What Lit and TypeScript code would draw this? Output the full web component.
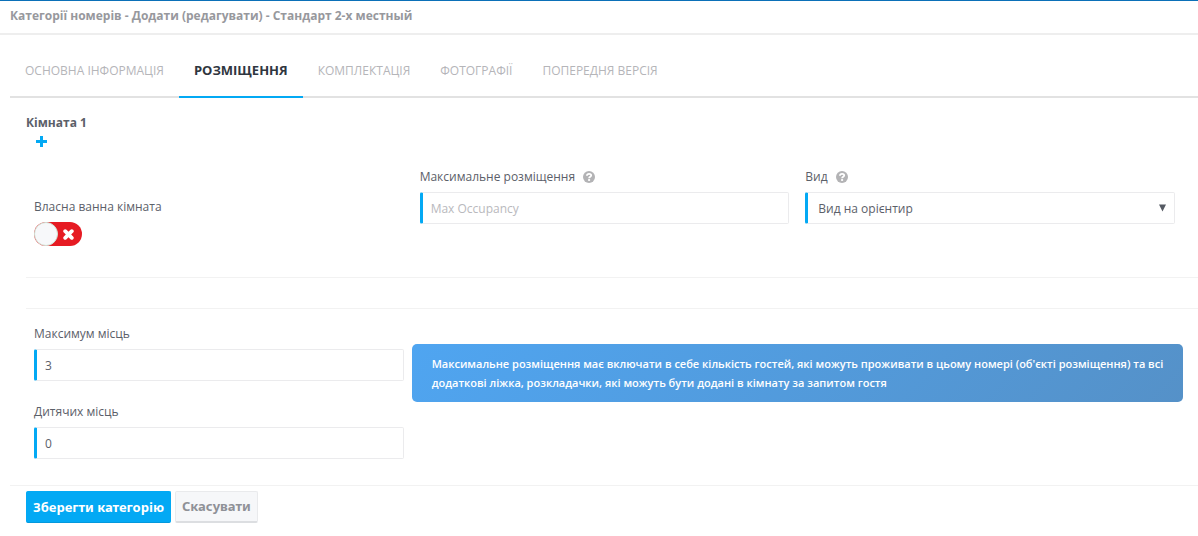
import { LitElement, html, css, svg } from "lit";
import { customElement, property, state } from "lit/decorators.js";

const TABS = [
  { id: "main", title: "Основна інформація" },
  { id: "placement", title: "Розміщення" },
  { id: "equipment", title: "Комплектація" },
  { id: "photos", title: "Фотографії" },
  { id: "preview", title: "Попередня версія" },
];

const plusIcon = svg`<path d="M4 0h3v4h4v3h-4v4h-3v-4h-4v-3h4z" fill="currentColor" />`;

@customElement("help-mark")
class HelpMark extends LitElement {
  static styles = css`
    :host {
      display: block;
      width: 12px;
      height: 12px;
      color: #b3b3b5;
    }
    svg {
      display: block;
    }
  `;

  render() {
    return html`<svg width="12" height="12" viewBox="0 0 12 12" aria-hidden="true">
      <circle cx="6" cy="6" r="6" fill="currentColor" />
      <path
        d="M3.9 4.7C4 3.4 4.9 2.8 6.1 2.8C7.3 2.8 8.2 3.5 8.2 4.5C8.2 5.9 6.1 5.8 6.1 7.3"
        fill="none"
        stroke="#fff"
        stroke-width="1.8"
      />
      <rect x="5.1" y="8.1" width="2" height="1.8" fill="#fff" />
    </svg>`;
  }
}

@customElement("app-root")
class AppRoot extends LitElement {
  @property() heading = "Категорії номерів - Додати (редагувати) - Стандарт 2-х местный";
  @state() private active = "placement";
  @state() private bathroom = false;

  static styles = css`
    :host {
      display: block;
      background: #fff;
      color: #5b6069;
      font-family: "Open Sans", "Noto Sans", sans-serif;
      font-size: 12px;
      line-height: 18px;
    }
    * {
      box-sizing: border-box;
    }
    .top {
      border-top: 1px solid #0b70b8;
      border-bottom: 2px solid #eee;
      padding: 6px 10px 8px;
    }
    h1 {
      margin: 0;
      font-size: 12px;
      line-height: 18px;
      font-weight: 700;
      color: #97989d;
    }
    .body {
      padding-left: 10px;
    }
    .tabs {
      display: flex;
      margin-top: 10px;
      border-bottom: 2px solid #e2e2e2;
    }
    .tab {
      padding: 17px 15px 16px;
      margin-bottom: -2px;
      border-bottom: 2px solid transparent;
      color: #b5b5b9;
      text-decoration: none;
      text-transform: uppercase;
    }
    .tab.active {
      padding: 16px 15px 17px;
      color: #2f3640;
      font-size: 13px;
      font-weight: 700;
      border-bottom-color: #03a9f4;
    }
    .panel {
      padding: 16px 0 0 16px;
    }
    h2 {
      margin: 0;
      font-size: 12px;
      line-height: 18px;
      font-weight: 700;
    }
    .add {
      display: block;
      margin: 4px 0 0 10px;
      padding: 0;
      border: 0;
      background: none;
      color: #03a9f4;
    }
    .add svg {
      display: block;
    }
    .row {
      display: grid;
      grid-template-columns: repeat(3, 1fr);
      margin-right: 15px;
    }
    .room {
      padding: 21px 0 26px;
    }
    .cell {
      padding: 0 8px;
    }
    .low {
      padding-top: 30px;
    }
    .caption {
      display: flex;
      align-items: center;
      gap: 8px;
      margin-bottom: 6px;
    }
    .field {
      display: block;
      width: 100%;
      height: 32px;
      margin: 0;
      padding: 0 8px;
      border: 1px solid #ebebed;
      border-left: 3px solid #03a9f4;
      border-radius: 2px;
      outline: 0;
      background: #fff;
      color: #5b6069;
      font: inherit;
    }
    .field::placeholder {
      color: #b9b9bd;
      opacity: 1;
    }
    .select {
      display: grid;
      align-items: center;
    }
    .select > * {
      grid-area: 1 / 1;
    }
    .select .field {
      appearance: none;
      padding: 1px 10px 0;
    }
    .arrow {
      justify-self: end;
      margin-right: 9px;
      pointer-events: none;
    }
    .switch {
      display: inline-grid;
      align-items: center;
      width: 48px;
      height: 24px;
      border-radius: 12px;
      background: #e61b23;
    }
    .switch > * {
      grid-area: 1 / 1;
    }
    .switch input {
      width: 48px;
      height: 24px;
      margin: 0;
      opacity: 0;
    }
    .knob {
      width: 24px;
      height: 24px;
      border: 1px solid #cfe3d6;
      border-radius: 50%;
      background: #f7f8fa;
      pointer-events: none;
    }
    .cross {
      justify-self: end;
      margin-right: 8px;
      pointer-events: none;
    }
    .switch.on {
      background: #2bb673;
    }
    .switch.on .knob {
      justify-self: end;
    }
    .switch.on .cross {
      display: none;
    }
    .rule {
      margin: 0;
      border: 0;
      border-top: 1px solid #f2f2f2;
    }
    .rule + .rule {
      margin-top: 30px;
    }
    .limits {
      display: grid;
      grid-template-columns: 1fr 2fr;
      margin-right: 15px;
      padding: 16px 0 26px;
    }
    .stack {
      display: grid;
      gap: 22px;
      padding: 0 8px;
    }
    .note {
      align-self: start;
      margin: 19px 0 0;
      padding: 10px 16px 10px 20px;
      border-radius: 5px;
      background: linear-gradient(135deg, #4fa5f1, #5591c8);
      color: #fff;
      font-size: 11px;
      font-weight: 600;
      line-height: 19px;
    }
    .actions {
      display: flex;
      gap: 4px;
      padding: 5px 16px 13px;
    }
    .btn {
      height: 32px;
      padding: 0 6px 1px;
      border: 1px solid #e9eaec;
      border-bottom: 2px solid #dcdee1;
      border-radius: 2px;
      background: #f6f7f9;
      color: #8f9197;
      font: 700 13px/18px "Noto Sans", "Open Sans", sans-serif;
    }
    .btn.save {
      border-color: #03a9f4;
      border-bottom: 1px solid #0398dc;
      background: #03a9f4;
      color: #fff;
    }
  `;

  render() {
    return html`
      <header class="top"><h1>${this.heading}</h1></header>
      <main class="body">
        <nav class="tabs">
          ${TABS.map(
            (t) => html`<a
              class="tab ${t.id === this.active ? "active" : ""}"
              href="#${t.id}"
              @click=${() => (this.active = t.id)}
              >${t.title}</a
            >`,
          )}
        </nav>
        <section class="panel">
          <h2>Кімната 1</h2>
          <button class="add" type="button" aria-label="+">
            <svg width="11" height="11" viewBox="0 0 11 11">${plusIcon}</svg>
          </button>
          <div class="row room">
            <div class="cell low">
              <label class="caption" for="bath">Власна ванна кімната</label>
              <span class="switch ${this.bathroom ? "on" : ""}">
                <input
                  id="bath"
                  type="checkbox"
                  .checked=${this.bathroom}
                  @change=${() => (this.bathroom = !this.bathroom)}
                />
                <span class="knob"></span>
                <svg class="cross" width="11" height="11" viewBox="0 0 11 11">
                  <path d="M2.2 2.2L8.8 8.8M8.8 2.2L2.2 8.8" stroke="#fff" stroke-width="3.8" stroke-linecap="round" />
                </svg>
              </span>
            </div>
            <div class="cell">
              <label class="caption" for="max">Максимальне розміщення <help-mark></help-mark></label>
              <input class="field" id="max" type="text" placeholder="Max Occupancy" />
            </div>
            <div class="cell">
              <label class="caption" for="view">Вид <help-mark></help-mark></label>
              <div class="select">
                <select class="field" id="view">
                  <option>Вид на орієнтир</option>
                </select>
                <svg class="arrow" width="7" height="8" viewBox="0 0 7 8">
                  <path d="M0 0.5H7L3.5 7.5Z" fill="#555a63" />
                </svg>
              </div>
            </div>
          </div>
          <hr class="rule" />
          <hr class="rule" />
          <div class="limits">
            <div class="stack">
              <div>
                <label class="caption" for="seats">Максимум місць</label>
                <input class="field" id="seats" type="text" value="3" />
              </div>
              <div>
                <label class="caption" for="kids">Дитячих місць</label>
                <input class="field" id="kids" type="text" value="0" />
              </div>
            </div>
            <p class="note">
              Максимальне розміщення має включати в себе кількість гостей, які можуть проживати в цьому номері
              (об'єкті розміщення) та всі додаткові ліжка, розкладачки, які можуть бути додані в кімнату за запитом
              гостя
            </p>
          </div>
        </section>
        <hr class="rule" />
        <div class="actions">
          <button class="btn save" type="submit">Зберегти категорію</button>
          <button class="btn" type="button">Скасувати</button>
        </div>
      </main>
    `;
  }
}
